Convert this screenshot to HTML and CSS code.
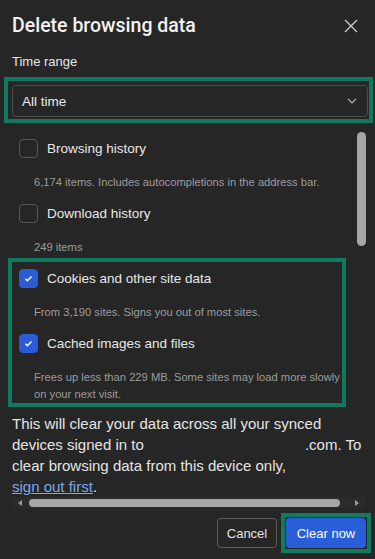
FILE: index.html
```html
<!DOCTYPE html>
<html lang="en">
  <head>
    <meta charset="UTF-8" />
    <meta name="viewport" content="width=device-width, initial-scale=1.0" />
    <title>Delete browsing data</title>
    <link rel="stylesheet" href="styles.css">
  </head>
  <body>
    <div class="dialog">
      <div class="header">
        <h1>Delete browsing data</h1>
        <button type="button" class="close" aria-label="Close">
          <svg width="28" height="28" viewBox="0 0 28 28">
            <path d="M8 8L20 20M20 8L8 20" stroke="#cfcfcf" stroke-width="1.3" fill="none" />
          </svg>
        </button>
      </div>

      <!-- Time range -->
      <label class="field-label" for="range">Time range</label>
      <div class="highlight highlight-select">
        <div class="select" id="range">
          <span>All time</span>
          <svg width="10" height="6" viewBox="0 0 10 6">
            <path d="M1 0.8L5 4.8L9 0.8" stroke="#b8b8b8" stroke-width="1.2" fill="none" />
          </svg>
        </div>
      </div>

      <!-- Data types -->
      <div class="list">
        <div class="list-items">
          <div class="option">
            <div class="option-row">
              <span class="checkbox"></span>
              <span>Browsing history</span>
            </div>
            <div class="option-desc">6,174 items. Includes autocompletions in the address bar.</div>
          </div>
          <div class="option">
            <div class="option-row">
              <span class="checkbox"></span>
              <span>Download history</span>
            </div>
            <div class="option-desc">249 items</div>
          </div>
          <div class="highlight highlight-list">
            <div class="option">
              <div class="option-row">
                <span class="checkbox checked">
                  <svg width="19" height="19" viewBox="0 0 19 19">
                    <path d="M6 9.8L8.3 12L12.8 7.3" stroke="#fff" stroke-width="1.7" fill="none" />
                  </svg>
                </span>
                <span>Cookies and other site data</span>
              </div>
              <div class="option-desc">From 3,190 sites. Signs you out of most sites.</div>
            </div>
            <div class="option">
              <div class="option-row">
                <span class="checkbox checked">
                  <svg width="19" height="19" viewBox="0 0 19 19">
                    <path d="M6 9.8L8.3 12L12.8 7.3" stroke="#fff" stroke-width="1.7" fill="none" />
                  </svg>
                </span>
                <span>Cached images and files</span>
              </div>
              <div class="option-desc">Frees up less than 229 MB. Some sites may load more slowly on your next visit.</div>
            </div>
          </div>
        </div>
        <div class="scrollbar"><div class="thumb"></div></div>
      </div>

      <p class="sync-note">
        This will clear your data across all your synced devices signed in to <span class="account"></span>.com.
        To clear browsing data from this device only, <a href="#" class="link">sign out first</a>.
      </p>
      <div class="hscroll">
        <span class="arrow arrow-left"></span>
        <span class="hthumb"></span>
        <span class="arrow arrow-right"></span>
      </div>

      <div class="actions">
        <button type="button" class="btn btn-cancel">Cancel</button>
        <div class="highlight highlight-btn">
          <button type="button" class="btn btn-primary">Clear now</button>
        </div>
      </div>
    </div>
  </body>
</html>
```

FILE: styles.css
```css
body {
  margin: 0;
  background-color: #262626;
  color: #e3e3e3;
  font-family: "Liberation Sans", Arial, sans-serif;
}
.dialog {
  padding: 12px 9px 0 12px;
}
.header {
  display: flex;
  align-items: center;
  justify-content: space-between;
  height: 28px;
}
h1 {
  margin: 0;
  font-family: Roboto, sans-serif;
  font-weight: 500;
  font-size: 19.5px;
  line-height: 28px;
  color: #f2f2f2;
}
.close {
  width: 28px;
  height: 28px;
  padding: 0;
  margin-right: 1px;
  border: none;
  background: none;
  display: flex;
}
.field-label {
  display: block;
  margin-top: 13px;
  font-size: 13px;
  line-height: 18px;
  color: #e6e6e6;
}
.highlight {
  border: 4px solid #107a61;
}
.highlight-select {
  margin: 6px -7px 0 -8px;
  padding: 4px 1px 2px 4px;
}
.select {
  box-sizing: border-box;
  height: 32px;
  border: 1px solid #4d4d4d;
  border-radius: 4px;
  padding: 0 10px 0 9px;
  display: flex;
  align-items: center;
  justify-content: space-between;
  font-size: 13.5px;
  color: #ececec;
}
.list {
  display: flex;
  margin-top: 5px;
}
.list-items {
  flex: 1;
  padding-top: 10px;
}
.scrollbar {
  width: 9px;
  margin-left: 7px;
}
.thumb {
  margin-top: 4px;
  height: 114px;
  border-radius: 5px;
  background-color: #a6a6a6;
}
.option + .option {
  margin-top: 12px;
}
.option-row {
  display: flex;
  align-items: center;
  gap: 9px;
  height: 20px;
  padding-left: 7px;
  font-size: 13.5px;
  color: #e6e6e6;
}
.checkbox {
  box-sizing: border-box;
  width: 19px;
  height: 19px;
  border: 1px solid #575757;
  border-radius: 4px;
  display: flex;
  align-items: center;
  justify-content: center;
}
.checkbox.checked {
  background-color: #2b5cd6;
  border-color: #2b5cd6;
}
.option-desc {
  margin-top: 16px;
  padding-left: 22px;
  font-size: 11.2px;
  line-height: 17px;
  color: #9c9c9c;
}
.highlight-list {
  margin: 2px 4px 0 -4px;
  padding-top: 6px;
}
.sync-note {
  margin: 6px 0 0;
  font-size: 15px;
  line-height: 21px;
  color: #e4e4e4;
}
.account {
  display: inline-block;
  width: 157px;
}
.link {
  color: #7ea6ea;
  white-space: nowrap;
}
.hscroll {
  display: flex;
  align-items: center;
  height: 11px;
  padding: 0 7px 0 6px;
  background-color: #2b2b2b;
}
.arrow {
  width: 0;
  height: 0;
  border-top: 3px solid transparent;
  border-bottom: 3px solid transparent;
}
.arrow-left {
  border-right: 4px solid #9a9a9a;
}
.arrow-right {
  border-left: 4px solid #9a9a9a;
}
.hthumb {
  flex: 1;
  height: 8px;
  margin: 0 15px 0 7px;
  border-radius: 4px;
  background-color: #a6a6a6;
}
.actions {
  display: flex;
  justify-content: flex-end;
  align-items: center;
  gap: 4px;
  margin: 5px -5px 0 0;
}
.highlight-btn {
  padding: 1px;
}
.btn {
  height: 30px;
  border-radius: 4px;
  font-family: "Liberation Sans", Arial, sans-serif;
  font-size: 13px;
  cursor: pointer;
}
.btn-cancel {
  width: 60px;
  border: 1px solid #5e5e5e;
  background: none;
  color: #e2e2e2;
}
.btn-primary {
  display: block;
  width: 80px;
  border: none;
  background-color: #2a5dd8;
  color: #ffffff;
}
```
